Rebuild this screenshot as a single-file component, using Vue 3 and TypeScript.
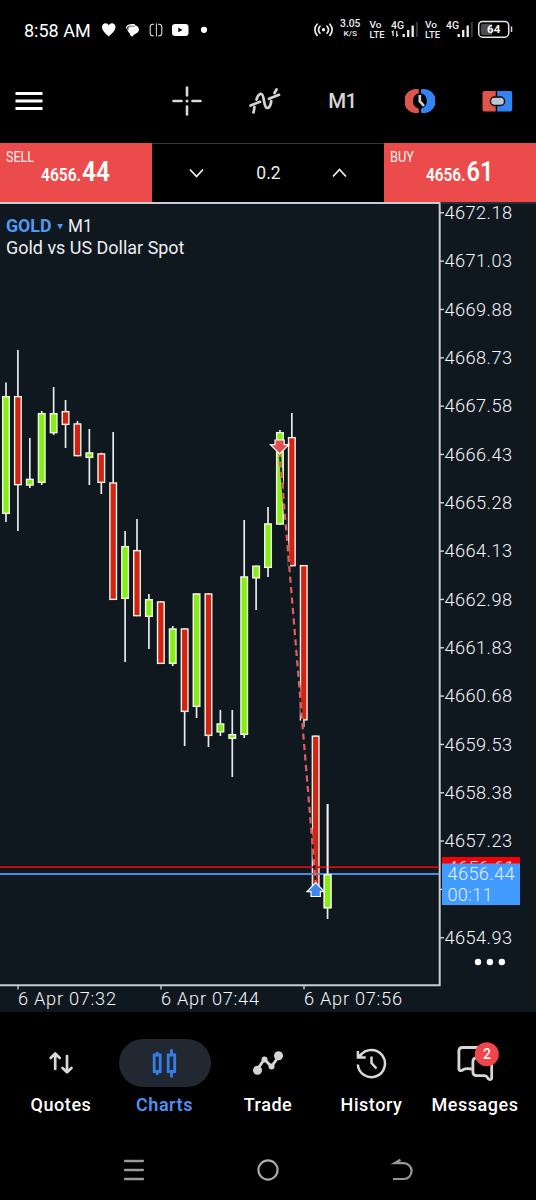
<script setup lang="ts">
interface Candle {
  up: boolean
  high: number
  top: number
  bottom: number
  low: number
}

const c = (up: boolean, high: number, top: number, bottom: number, low: number): Candle => ({ up, high, top, bottom, low })

const candles: Candle[] = [
  c(true, 382.5, 396, 514, 522),
  c(false, 350, 396, 485.3, 531),
  c(true, 438, 478.7, 485.7, 488),
  c(true, 411, 413, 483, 485),
  c(true, 387, 413, 433.3, 435),
  c(false, 400, 411, 425, 448),
  c(false, 421, 423.3, 456.3, 456.3),
  c(true, 429, 452.3, 458, 485),
  c(false, 452.7, 453.3, 483, 494),
  c(false, 432, 482.3, 600, 600),
  c(true, 531, 546, 599, 662),
  c(false, 519, 550, 616.3, 616.3),
  c(true, 594, 599, 617, 649),
  c(false, 601.3, 601.3, 664, 664),
  c(true, 626, 628.3, 664, 666),
  c(false, 628.3, 628.3, 712, 746),
  c(true, 593.3, 593.3, 707, 718),
  c(false, 593.3, 593.3, 736, 747),
  c(true, 710, 723.3, 732.5, 736),
  c(true, 710, 734, 739, 777),
  c(true, 520, 576.3, 735, 738),
  c(true, 565.5, 565.5, 578.5, 610),
  c(true, 507, 523.3, 568, 577),
  c(true, 430, 432, 524.7, 524.7),
  c(false, 413, 437, 566.3, 566.3),
  c(false, 565, 565, 720.5, 727),
  c(false, 735.5, 735.5, 890, 890),
  c(true, 804, 874, 908.3, 919),
]
const cx = (i: number): number => 6 + i * 11.91

const prices = ['4672.18', '4671.03', '4669.88', '4668.73', '4667.58', '4666.43', '4665.28', '4664.13', '4662.98', '4661.83', '4660.68', '4659.53', '4658.38', '4657.23', '', '4654.93']
const priceY = (i: number): number => 212.8 + i * 48.33

const times = [
  { x: 18, label: '6 Apr 07:32' },
  { x: 161, label: '6 Apr 07:44' },
  { x: 304, label: '6 Apr 07:56' },
]

const tabs = ['Quotes', 'Charts', 'Trade', 'History', 'Messages']
</script>

<template>
  <div class="screen">
    <header class="status">
      <span class="clock">8:58 AM</span>
      <svg class="notices" width="112" height="20" viewBox="0 0 112 20">
        <path d="M8.7 16.5C5.4 13.6 2 10.7 2 7.1 2 4.6 3.8 3.3 5.5 3.3c1.4 0 2.6.7 3.2 2 .7-1.3 1.9-2 3.3-2 1.8 0 3.500 1.400 3.500 3.800 0 3.600-3.500 6.500-6.800 9.400Z" fill="#fff" />
        <ellipse cx="33.200" cy="9.600" rx="5.800" ry="4.600" fill="#fff" />
        <path d="M29.500 12.500h7l-4.500 4.300q-2.500-1-2.500-4.300Z" fill="#fff" />
        <path d="M26.300 8.500c.4-3.500 3-4.200 8.700-3.700" fill="none" stroke="#fff" stroke-width="1.200" />
        <path d="M28 10c0-3.300 2-3.900 7-3.700" fill="none" stroke="#000" stroke-width=".5" />
        <path d="M54 4.300h-1.200c-1.600 0-2.600 1-2.600 2.800v5.800c0 1.800 1 2.800 2.600 2.800H54M58 4.300h1.200c1.600 0 2.600 1 2.600 2.800v5.800c0 1.800-1 2.800-2.600 2.800H58" fill="none" stroke="#ddd" stroke-width="1.100" />
        <path d="M56.400 3.500v13" stroke="#ddd" stroke-width="1" />
        <rect x="72" y="4" width="16.500" height="12" rx="3" fill="#fff" />
        <path d="m78.300 7.500 4.300 2.400-4.300 2.400Z" fill="#000" />
        <circle cx="104" cy="9.800" r="3.100" fill="#fff" />
      </svg>
      <svg class="signals" width="204" height="24" viewBox="0 0 204 24">
        <g fill="none" stroke="#eee" stroke-width="1.700" stroke-linecap="round">
          <path d="M6.500 8.700c-1.700 2-1.700 5 0 7M13.500 8.700c1.700 2 1.700 5 0 7M3.600 6.700c-3 3.300-3 8 0 11.200M16.400 6.700c3 3.300 3 8 0 11.200" />
        </g>
        <circle cx="10" cy="12.200" r="1.700" fill="#eee" />
        <g class="tiny">
          <text x="26.500" y="9.800" font-size="11" textLength="20.500" lengthAdjust="spacingAndGlyphs">3.05</text>
          <text x="30" y="18.500" font-size="8" textLength="13.500" lengthAdjust="spacingAndGlyphs">K/S</text>
          <text x="56" y="10.800" font-size="9.800" textLength="12" lengthAdjust="spacingAndGlyphs">Vo</text>
          <text x="56" y="20" font-size="9.800" textLength="15" lengthAdjust="spacingAndGlyphs">LTE</text>
          <text x="77.500" y="11.300" font-size="10.500" textLength="13" lengthAdjust="spacingAndGlyphs">4G</text>
          <text x="111.500" y="10.800" font-size="9.800" textLength="12" lengthAdjust="spacingAndGlyphs">Vo</text>
          <text x="111.500" y="20" font-size="9.800" textLength="15" lengthAdjust="spacingAndGlyphs">LTE</text>
          <text x="132.500" y="11.300" font-size="10.500" textLength="13" lengthAdjust="spacingAndGlyphs">4G</text>
        </g>
        <path d="M79.500 18.600V13.800l-1.300 1M83.300 13.500v5l1.300-1" fill="none" stroke="#eee" stroke-width="1.200" />
        <g v-for="x in [89, 144]" :key="x">
          <path :d="`M${x + 1.200} 16.500v3M${x + 5.700} 12.500v7M${x + 10.200} 8v11.500`" stroke="#eee" stroke-width="2.300" />
          <path :d="`M${x + 14.300} 4.500v15`" stroke="#393939" stroke-width="2" />
        </g>
        <rect x="165.200" y="3.900" width="30" height="15.800" rx="4" fill="none" stroke="#e8e8e8" stroke-width="1.500" />
        <path d="M169.500 6.200h9v11.200h-9a2.200 2.200 0 0 1-2.200-2.200V8.400a2.200 2.200 0 0 1 2.200-2.200Z" fill="#4b4b4b" />
        <path d="M198 9v5.500" stroke="#ddd" stroke-width="1.500" />
        <text class="batt" x="180.200" y="15.900">64</text>
      </svg>
    </header>

    <nav class="toolbar">
      <svg width="28" height="30" viewBox="0 0 28 30"><path d="M.5 7.500h27M.5 15h27M.5 22.500h27" stroke="#fff" stroke-width="2.800" /></svg>
      <svg width="30" height="30" viewBox="0 0 30 30">
        <path d="M15 1.500v8M15 20.500v8M1.500 15h8M20.500 15h8" stroke="#d8d8d8" stroke-width="2.600" stroke-linecap="round" />
        <circle cx="15" cy="15" r="1.500" fill="#d8d8d8" />
      </svg>
      <svg width="34" height="30" viewBox="0 0 34 30">
        <g fill="none" stroke="#d4d4d4" stroke-width="2.700" stroke-linecap="round">
          <path d="M2.500 19.500 12 15.800M21 12.800l10-4" />
          <path d="M6.500 21 5.500 26.500M8.500 13.500C9.800 9.500 11.500 7.500 13.500 8c3 .8 2 13.500 5.500 14 3 .3 3.800-3.500 4.300-7M26.500 7 28.500 3.500" />
        </g>
      </svg>
      <span class="period">M1</span>
      <svg width="30" height="30" viewBox="0 0 30 30">
        <path d="M13.800 3.300A12 12 0 1 0 13.800 26.700V22.700A8 8 0 0 1 13.800 7.300Z" fill="#dd554d" />
        <path d="M16 3.300A12 12 0 1 1 16 26.700V22.700A8 8 0 0 0 16 7.300Z" fill="#3184f2" />
        <path d="M14.800 9v6.200l4.200 4.800" fill="none" stroke="#cbd2da" stroke-width="2.600" />
      </svg>
      <svg width="32" height="30" viewBox="0 0 32 30">
        <path d="M3.500 5h11.200v20.500H3.500A2 2 0 0 1 1.500 23.500V7a2 2 0 0 1 2-2Z" fill="#dd554d" />
        <path d="M16.200 5h13a2 2 0 0 1 2 2v16.500a2 2 0 0 1-2 2h-13Z" fill="#3184f2" />
        <rect x="9.500" y="11" width="14" height="8.500" rx="4" fill="#bcc7d1" stroke="#080808" stroke-width="1.400" />
      </svg>
    </nav>

    <section class="deal">
      <button class="side">
        <svg width="152" height="59" viewBox="0 0 152 59">
          <text x="6" y="19.300" font-size="15" textLength="28" lengthAdjust="spacingAndGlyphs">SELL</text>
          <text class="bold" x="41" y="37.800" font-size="19" textLength="40" lengthAdjust="spacingAndGlyphs">4656.</text>
          <text class="bold" x="82" y="37.700" font-size="27" textLength="28" lengthAdjust="spacingAndGlyphs">44</text>
        </svg>
      </button>
      <div class="volume">
        <svg width="18" height="14" viewBox="0 0 18 14"><path d="m2 3.500 6.500 7 6.500-7" fill="none" stroke="#eee" stroke-width="1.800" /></svg>
        <span class="lots">0.2</span>
        <svg width="18" height="14" viewBox="0 0 18 14"><path d="m2 10.500 6.500-7 6.500 7" fill="none" stroke="#eee" stroke-width="1.800" /></svg>
      </div>
      <button class="side">
        <svg width="152" height="59" viewBox="0 0 152 59">
          <text x="6" y="19.300" font-size="15" textLength="24" lengthAdjust="spacingAndGlyphs">BUY</text>
          <text class="bold" x="42" y="37.800" font-size="19" textLength="39.500" lengthAdjust="spacingAndGlyphs">4656.</text>
          <text class="bold" x="82.500" y="37.700" font-size="27" textLength="27" lengthAdjust="spacingAndGlyphs">61</text>
        </svg>
      </button>
    </section>

    <svg class="chart" width="536" height="810" viewBox="0 202 536 810">
      <rect y="202" width="536" height="810" fill="#0f171f" />
      <path d="M0 203H439.700V985.200H0" fill="none" stroke="#c9cdd1" stroke-width="2" />
      <path d="M440 203h96" stroke="#554248" stroke-width="1" />
      <g class="names">
        <text x="6" y="232.200" font-weight="700" textLength="45.500" lengthAdjust="spacingAndGlyphs">GOLD</text>
        <path d="M57.200 224h5.800l-2.900 5.500Z" fill="#4b96ef" />
        <text x="68" y="232.200" textLength="24.500" lengthAdjust="spacingAndGlyphs">M1</text>
        <text x="6" y="254" textLength="178.500" lengthAdjust="spacingAndGlyphs">Gold vs US Dollar Spot</text>
      </g>

      <g v-for="(k, i) in candles" :key="i">
        <path :d="`M${cx(i)} ${k.high}V${k.low}`" stroke="#e8eaec" stroke-width="1.700" />
        <rect :x="cx(i) - 3.300" :y="k.top + 0.650" width="6.600" :height="k.bottom - k.top - 1.300" :fill="k.up ? '#83ef12' : '#d32212'" stroke="#f4f5e9" stroke-width="1.400" />
      </g>

      <path d="M0 867.200H439" stroke="#d80a0e" stroke-width="1.800" />
      <path d="M0 874H439" stroke="#4b8ddb" stroke-width="1.800" />
      <path d="M327.600 804V874" stroke="#f0f0f0" stroke-width="1.700" />
      <rect x="324.300" y="874.700" width="6.600" height="33" fill="#83ef12" stroke="#f4f5e9" stroke-width="1.400" />

      <path d="M279.600 451 315.800 884" stroke="#171b19" stroke-width="2" />
      <path d="M279.600 451 315.800 884" stroke="#e45b62" stroke-width="2.200" stroke-dasharray="6.200 4.300" />
      <path d="M275 440h9.200v4.600h4.600l-9.200 9.200-9.200-9.200h4.600Z" fill="#e74c50" stroke="#fff" stroke-width="1.200" />
      <path d="M311 896.500h9.400v-4.800h4l-8.700-9-8.700 9h4Z" fill="#3f87ee" stroke="#fff" stroke-width="1.200" />

      <g class="axis">
        <g v-for="(p, i) in prices" :key="i">
          <path :d="`M440 ${priceY(i)}h4`" stroke="#d5d8da" stroke-width="1.400" />
          <text v-if="p" x="444.500" :y="priceY(i) + 6.200" textLength="67.500" lengthAdjust="spacing">{{ p }}</text>
        </g>
        <g v-for="t in times" :key="t.x">
          <path :d="`M${t.x} 986v3.500`" stroke="#d5d8da" stroke-width="1.300" />
          <text :x="t.x" y="1005.200" textLength="98" lengthAdjust="spacing">{{ t.label }}</text>
        </g>
        <rect x="442" y="857" width="78" height="20" fill="#f60008" />
        <text x="447.500" y="873.800" textLength="67">4656.61</text>
        <rect x="442" y="863.500" width="78" height="41.500" fill="#429bff" />
        <text class="quote" x="447.500" y="880.300" textLength="67">4656.44</text>
        <text class="quote" x="447.500" y="901" textLength="45">00:11</text>
      </g>
      <g fill="#fff"><circle cx="478" cy="962" r="3.200" /><circle cx="489.900" cy="962" r="3.200" /><circle cx="501.800" cy="962" r="3.200" /></g>
    </svg>

    <nav class="tabs">
      <div v-for="tab in tabs" :key="tab" class="tab" :class="{ active: tab === 'Charts' }">
        <div class="pill">
          <svg v-if="tab === 'Quotes'" width="30" height="30" viewBox="0 0 30 30" fill="none" stroke="#d8d8d8" stroke-width="2.700" stroke-linecap="round" stroke-linejoin="round">
            <path d="M9.200 21V6M4.700 10l4.500-4.500 4.500 4.500M21 8v16M16.500 20l4.500 4.300 4.500-4.300" />
          </svg>
          <svg v-else-if="tab === 'Charts'" width="30" height="30" viewBox="0 0 30 30" fill="none" stroke="#347de8" stroke-width="2.800">
            <path d="M4.200 7h6v16.500h-6ZM7.200 4v3M7.200 23.500v3.500M18.200 7h6.500v16.500h-6.500ZM21.500 1.200V7M21.500 23.500v6" />
          </svg>
          <svg v-else-if="tab === 'Trade'" width="30" height="30" viewBox="0 0 30 30">
            <path d="M4 22 11.300 11.300 18.500 18.500 26 8" fill="none" stroke="#d5d5d5" stroke-width="2.900" />
            <g fill="#d5d5d5"><circle cx="4.500" cy="22.300" r="4.500" /><circle cx="11.500" cy="11.500" r="3" /><circle cx="18.500" cy="18.500" r="3" /><circle cx="25.500" cy="7.700" r="4.500" /></g>
          </svg>
          <svg v-else-if="tab === 'History'" width="32" height="32" viewBox="0 0 32 32" fill="none" stroke="#d8d8d8" stroke-width="2.500">
            <path d="M1.800 17.500A13.600 13.600 0 1 0 4.400 8.500" />
            <path d="M1.900 4v6.500h7.800M2.500 10l3-3" />
            <path d="M15.500 9.500v6.500l5 5.500" />
          </svg>
          <svg v-else class="bubbles" width="42" height="38" viewBox="0 0 42 38">
            <g fill="none" stroke="#d7d7d7" stroke-width="2.800" stroke-linejoin="round">
              <path d="M17.800 25c-4-.4-7.200-.5-8.200.4-2 1.700-4.700 2-4.700-1V7c0-2.300 1.200-3.500 3.500-3.500h17" />
              <path d="M22.500 13.800h12.800c1.500 0 2.400 1 2.400 2.500v17.500c0 2-1.600 2.200-3 1.300-1-.7-1.500-3.500-4-3.500h-7.900c-2.600 0-3.900-1.300-3.900-3.900V17.600c0-2.600 1.200-3.800 3.600-3.800Z" />
            </g>
            <circle cx="32.800" cy="10.200" r="12" fill="#ee464b" />
            <text class="count" x="32.900" y="15.200">2</text>
          </svg>
        </div>
        <span class="caption">{{ tab }}</span>
      </div>
    </nav>

    <footer class="system">
      <svg width="22" height="24" viewBox="0 0 22 24"><path d="M2 3h18M2 12h18M2 21h18" stroke="#999" stroke-width="2.300" stroke-linecap="round" /></svg>
      <svg width="24" height="24" viewBox="0 0 24 24"><circle cx="12" cy="12" r="9.600" fill="none" stroke="#aaa" stroke-width="2.100" /></svg>
      <svg width="24" height="24" viewBox="0 0 24 24" fill="none" stroke="#999" stroke-width="2.200">
        <path d="M3 21h10.700a7.900 7.900 0 0 0 0-15.800H4.500l6-3.500" />
      </svg>
    </footer>
  </div>
</template>

<style>
body {
  margin: 0;
  background: #000;
}
</style>

<style scoped>
.screen {
  width: 536px;
  height: 1200px;
  overflow: hidden;
  background: #000;
  color: #fff;
  font-family: Roboto, "Liberation Sans", sans-serif;
  display: flex;
  flex-direction: column;
}
svg {
  display: block;
  flex: none;
}
.status {
  height: 60px;
  display: flex;
  align-items: center;
  padding: 0 18px 0 24px;
  box-sizing: border-box;
}
.clock {
  font-size: 18px;
  width: 76px;
  white-space: nowrap;
}
.signals {
  margin-left: auto;
  margin-right: -5px;
  overflow: visible;
  transform: translate(-5.5px, -0.5px);
}
.tiny text {
  fill: #eee;
  font-weight: 500;
}
.batt {
  fill: #fff;
  font-size: 11.5px;
  font-weight: 700;
  text-anchor: middle;
}
.toolbar {
  height: 83px;
  display: grid;
  grid-template-columns: 28px 1fr repeat(4, 77.5px);
  align-items: center;
  justify-items: center;
  padding-left: 15px;
  padding-bottom: 2px;
  box-sizing: border-box;
}
.toolbar > :nth-child(2) {
  justify-self: end;
  margin-right: 24px;
}
.period {
  font-size: 20.5px;
  font-weight: 500;
  color: #d6d6d6;
  letter-spacing: -0.7px;
}
.deal {
  height: 59px;
  display: grid;
  grid-template-columns: 152px 232px 152px;
}
.side {
  border: 0;
  padding: 0;
  background: #eb4c4b;
  font-family: inherit;
}
.side text {
  fill: #fff3f0;
}
.side .bold {
  font-weight: 600;
  fill: #fff;
}
.volume {
  border-top: 1px solid #35383c;
  box-sizing: border-box;
  display: flex;
  align-items: center;
  justify-content: space-between;
  padding: 0 35px 0 36px;
}
.lots {
  font-size: 17.5px;
  color: #eee;
}
.names text {
  font-size: 18px;
  fill: #eef0f1;
}
.names text:first-child {
  fill: #5299f0;
}
.axis text {
  font-size: 18.2px;
  font-weight: 300;
  fill: #f5f7f9;
}
.axis .quote {
  fill: #e2effc;
}
.tabs {
  height: 128px;
  display: grid;
  grid-template-columns: repeat(5, 103.5px);
  justify-content: center;
  padding-top: 27px;
  box-sizing: border-box;
}
.tab {
  display: flex;
  flex-direction: column;
  align-items: center;
}
.pill {
  width: 92px;
  height: 48px;
  border-radius: 24px;
  display: flex;
  align-items: center;
  justify-content: center;
}
.active .pill {
  background: #212832;
}
.bubbles {
  overflow: visible;
}
.caption {
  margin-top: 7px;
  font-size: 18px;
  line-height: 22px;
  font-weight: 500;
  letter-spacing: 0.55px;
}
.active .caption {
  color: #4c91f1;
  font-weight: 600;
}
.count {
  font-size: 14px;
  font-weight: 500;
  fill: #fff;
  text-anchor: middle;
}
.system {
  height: 60px;
  display: grid;
  grid-template-columns: repeat(3, 134px);
  justify-content: center;
  justify-items: center;
  align-items: center;
}
</style>
